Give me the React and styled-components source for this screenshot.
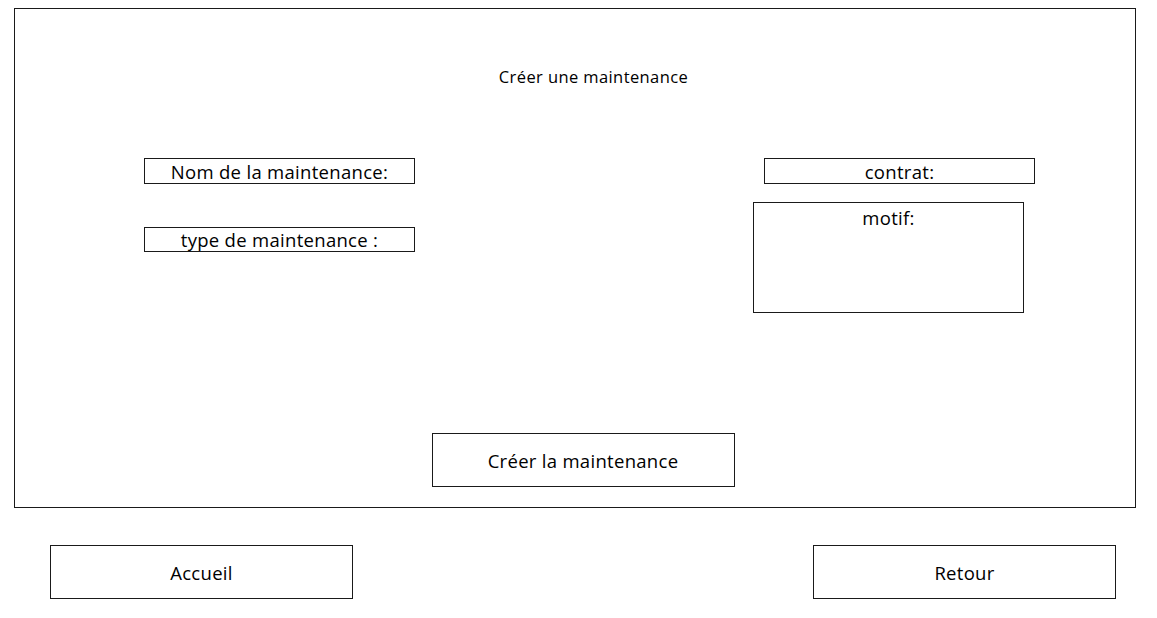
import React from "react";
import styled, { createGlobalStyle } from "styled-components";

const GlobalStyle = createGlobalStyle`
  body {
    margin: 0;
    background: #ffffff;
    font-family: "Open Sans", "Liberation Sans", sans-serif;
    color: #000000;
  }
`;

const Page = styled.div`
  width: 1157px;
  padding: 8px 0 0 14px;
  box-sizing: border-box;
`;

const Frame = styled.div`
  width: 1122px;
  height: 500px;
  border: 1px solid #1a1a1a;
  box-sizing: border-box;
  display: flex;
  flex-direction: column;
`;

const Title = styled.div`
  margin-top: 58px;
  padding-left: 37px;
  text-align: center;
  font-size: 16.5px;
  letter-spacing: 0.4px;
  line-height: 20px;
`;

const FormRow = styled.div`
  margin-top: 71px;
  display: flex;
  justify-content: space-between;
  padding: 0 100px 0 129px;
  height: 155px;
`;

const Column = styled.div`
  display: flex;
  flex-direction: column;
  align-items: ${(p) => (p.right ? "flex-end" : "flex-start")};
  gap: ${(p) => p.gap}px;
`;

const Field = styled.div`
  width: 271px;
  height: ${(p) => p.h}px;
  border: 1px solid #1a1a1a;
  box-sizing: border-box;
  margin-right: ${(p) => p.shift || 0}px;
  display: flex;
  justify-content: center;
  align-items: ${(p) => (p.top ? "flex-start" : "center")};
  padding-top: ${(p) => (p.top ? 4 : 1)}px;
  font-size: 18.5px;
  letter-spacing: 0.3px;
  line-height: 22px;
`;

const Button = styled.div`
  width: 303px;
  height: 54px;
  border: 1px solid #1a1a1a;
  box-sizing: border-box;
  display: flex;
  justify-content: center;
  align-items: center;
  font-size: 18.5px;
  letter-spacing: 0.3px;
  background: #ffffff;
`;

const SubmitWrap = styled.div`
  margin-top: 120px;
  display: flex;
  justify-content: center;
  padding-left: 16px;
`;

const Footer = styled.div`
  margin-top: 37px;
  width: 1102px;
  box-sizing: border-box;
  padding-left: 36px;
  display: flex;
  justify-content: space-between;
`;

export default function App() {
  return (
    <>
      <GlobalStyle />
      <Page>
        <Frame>
          <Title>Créer une maintenance</Title>
          <FormRow>
            <Column gap={43}>
              <Field h={26}>Nom de la maintenance:</Field>
              <Field h={25}>type de maintenance :</Field>
            </Column>
            <Column right gap={18}>
              <Field h={26}>contrat:</Field>
              <Field h={111} shift={11} top>
                motif:
              </Field>
            </Column>
          </FormRow>
          <SubmitWrap>
            <Button>Créer la maintenance</Button>
          </SubmitWrap>
        </Frame>
        <Footer>
          <Button>Accueil</Button>
          <Button>Retour</Button>
        </Footer>
      </Page>
    </>
  );
}
